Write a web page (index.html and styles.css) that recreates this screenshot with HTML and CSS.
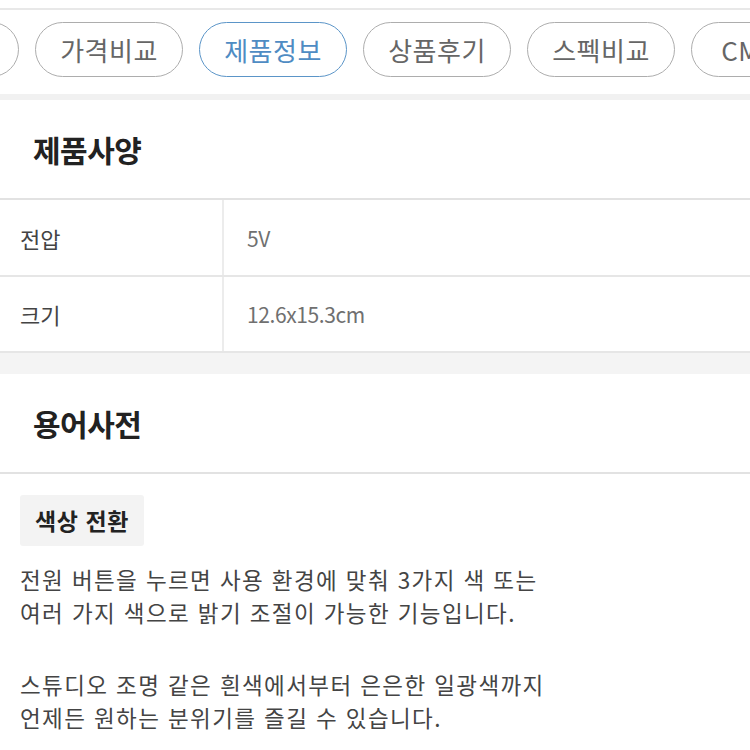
FILE: index.html
```html
<!DOCTYPE html>
<html lang="ko">
<head>
  <meta charset="UTF-8">
  <meta name="viewport" content="width=device-width, initial-scale=1.0">
  <title>제품정보</title>
  <link rel="stylesheet" href="styles.css">
</head>
<body>
  <div class="top-space"></div>
  <nav class="tabs">
    <a class="tab tab-first"></a>
    <a class="tab">가격비교</a>
    <a class="tab active">제품정보</a>
    <a class="tab">상품후기</a>
    <a class="tab">스펙비교</a>
    <a class="tab">CM영상</a>
  </nav>

  <section class="block">
    <h2 class="block-title">제품사양</h2>
    <div class="spec-row">
      <div class="spec-label">전압</div>
      <div class="spec-value">5V</div>
    </div>
    <div class="spec-row">
      <div class="spec-label">크기</div>
      <div class="spec-value">12.6x15.3cm</div>
    </div>
  </section>

  <div class="band"></div>

  <section class="block">
    <h2 class="block-title">용어사전</h2>
    <div class="dict">
      <span class="term">색상 전환</span>
      <p>전원 버튼을 누르면 사용 환경에 맞춰 3가지 색 또는<br>여러 가지 색으로 밝기 조절이 가능한 기능입니다.</p>
      <p>스튜디오 조명 같은 흰색에서부터 은은한 일광색까지<br>언제든 원하는 분위기를 즐길 수 있습니다.</p>
    </div>
  </section>
</body>
</html>
```

FILE: styles.css
```css
body {
  margin: 0;
  padding: 0;
  background: #fff;
  color: #333;
  font-family: "Noto Sans CJK KR", "Noto Sans", sans-serif;
  overflow: hidden;
}
.top-space {
  height: 8px;
  border-bottom: 2px solid #e8e8e8;
}
.tabs {
  display: flex;
  gap: 16px;
  padding: 12px 0 17px;
  border-bottom: 6px solid #f1f1f1;
  overflow: hidden;
  white-space: nowrap;
}
.tab {
  flex: 0 0 auto;
  width: 148px;
  height: 55px;
  box-sizing: border-box;
  border: 1.5px solid #adadad;
  border-radius: 28px;
  display: flex;
  align-items: center;
  justify-content: center;
  font-size: 26px;
  color: #666;
  letter-spacing: 0.5px;
}
.tab-first {
  margin-left: -129px;
}
.tab.active {
  border-color: #5b95c8;
  color: #4f8cc3;
}
.block-title {
  margin: 0;
  height: 98px;
  padding-left: 33px;
  display: flex;
  align-items: center;
  font-size: 30px;
  font-weight: 700;
  color: #222;
  letter-spacing: -0.5px;
  border-bottom: 2px solid #e2e2e2;
}
.spec-row {
  display: flex;
  height: 75px;
  border-bottom: 2px solid #e6e6e6;
  font-size: 22px;
}
.spec-row:last-child {
  border-bottom: none;
  height: 74px;
}
.spec-label {
  width: 224px;
  border-right: 2px solid #ececec;
  padding-left: 20px;
  display: flex;
  align-items: center;
  box-sizing: border-box;
  color: #444;
}
.spec-value {
  padding-left: 23px;
  display: flex;
  align-items: center;
  color: #707070;
  font-size: 21px;
  letter-spacing: -0.4px;
}
.band {
  height: 21px;
  background: #f4f4f4;
  border-top: 2px solid #e6e6e6;
}
.dict {
  padding: 21px 20px 0;
}
.term {
  display: inline-block;
  background: #f3f3f3;
  padding: 0 15px;
  height: 51px;
  line-height: 51px;
  font-size: 23px;
  font-weight: 700;
  color: #222;
  letter-spacing: 0.6px;
  border-radius: 3px;
}
.dict p {
  margin: 17px 0 39px;
  font-size: 22.5px;
  line-height: 33px;
  color: #444;
  letter-spacing: 1.4px;
}
.dict p + p {
  margin-top: 0;
}
```
